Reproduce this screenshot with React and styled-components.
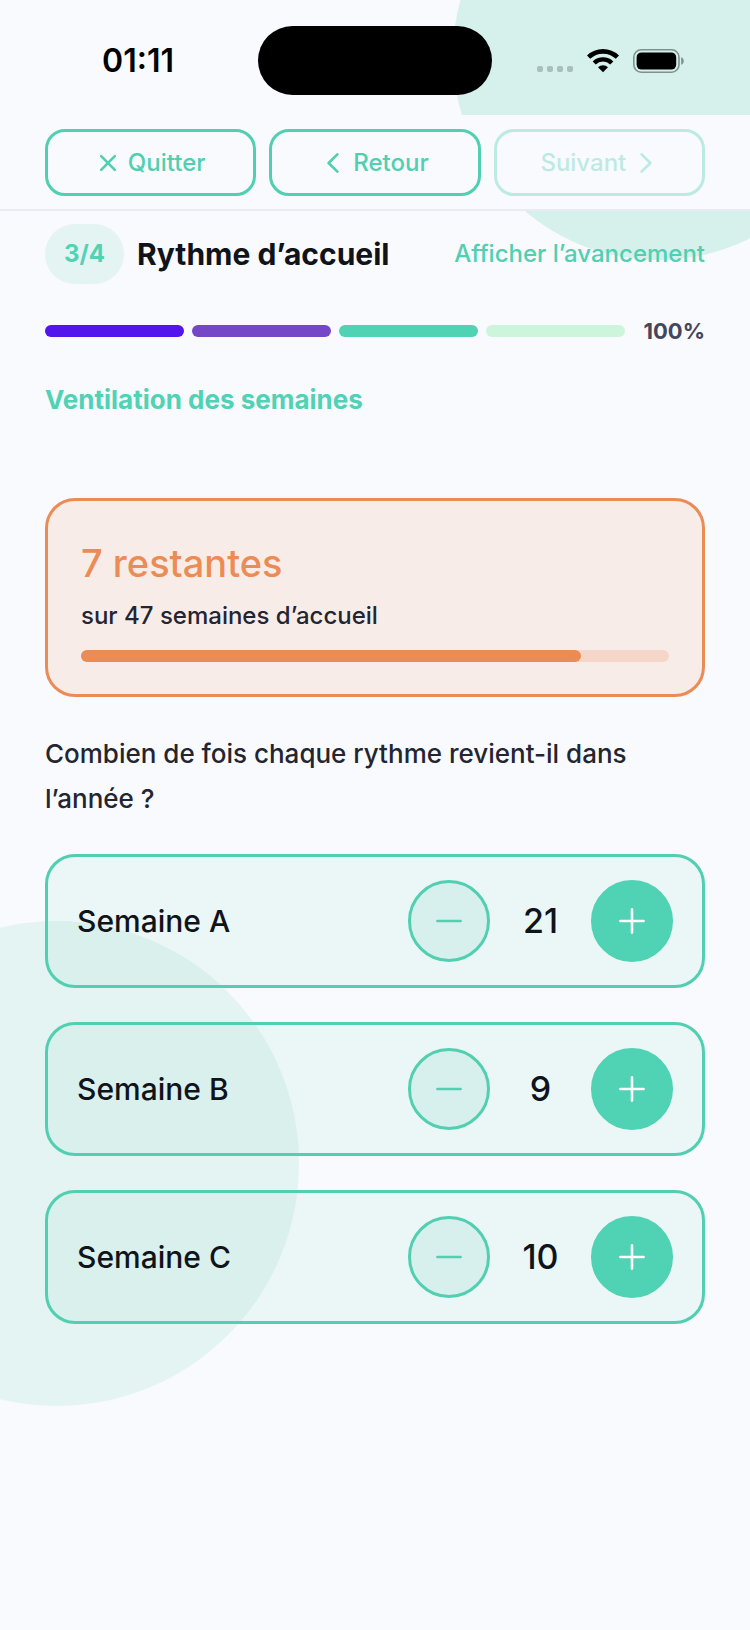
import React, { useState } from "react";
import styled, { createGlobalStyle } from "styled-components";

const GlobalStyle = createGlobalStyle`
  *, *::before, *::after {
    box-sizing: border-box;
  }

  body {
    margin: 0;
    background: #f8fafe;
    color: #10131a;
    font-family: Inter, "Liberation Sans", sans-serif;
    -webkit-font-smoothing: antialiased;
  }

  button {
    font-family: inherit;
    cursor: pointer;
  }
`;

const Page = styled.div`
  position: relative;
  min-height: 100vh;
  overflow: hidden;
  background: #f8fafe;
`;

const Bubble = styled.div`
  position: absolute;
  top: ${({ $top }) => $top}px;
  ${({ $side, $offset }) => `${$side}: ${$offset}px;`}
  width: ${({ $size }) => $size}px;
  height: ${({ $size }) => $size}px;
  border-radius: 50%;
  background: ${({ $color }) => $color};
`;

const Screen = styled.div`
  position: relative;
  display: flex;
  flex-direction: column;
`;

const StatusBar = styled.div`
  display: grid;
  grid-template-columns: 1fr 234px 1fr;
  align-items: center;
  height: 115px;
  padding: 6px 0 0;
`;

const Clock = styled.div`
  padding-left: 18px;
  text-align: center;
  font-size: 32px;
  font-weight: 600;
  line-height: 36px;
  color: #000;
`;

const Island = styled.div`
  height: 69px;
  border-radius: 35px;
  background: #000;
`;

const StatusIcons = styled.div`
  display: flex;
  align-items: center;
  justify-content: center;
  gap: 14px;
  padding-right: 20px;
`;

const Nav = styled.nav`
  display: flex;
  gap: 13px;
  padding: 14px 45px 13px;
  background: #f8fafe;
  border-bottom: 2px solid #e9ebf0;
`;

const NavButton = styled.button`
  flex: 1;
  display: flex;
  align-items: center;
  justify-content: center;
  gap: 8px;
  height: 67px;
  padding: 0;
  border: 3px solid #50cfb1;
  border-radius: 20px;
  background: transparent;
  color: #50cfb1;
  font-size: 24px;
  font-weight: 500;

  &:disabled {
    opacity: 0.35;
    cursor: default;
  }
`;

const Content = styled.main`
  display: flex;
  flex-direction: column;
  padding: 13px 45px 60px;
`;

const StepHeader = styled.header`
  display: flex;
  align-items: center;
  gap: 13px;
`;

const StepBadge = styled.span`
  padding: 0 19px;
  border-radius: 30px;
  background: #e4f4f3;
  color: #50d2b4;
  font-size: 24px;
  font-weight: 700;
  line-height: 60px;
`;

const StepTitle = styled.h1`
  flex: 1;
  margin: 0;
  font-size: 30px;
  font-weight: 700;
  line-height: 36px;
`;

const ProgressLink = styled.a`
  color: #50cfb1;
  font-size: 24px;
  font-weight: 500;
  line-height: 30px;
  text-decoration: none;
`;

const Steps = styled.div`
  display: flex;
  align-items: center;
  gap: 8px;
  margin-top: 32px;
`;

const Step = styled.span`
  flex: 1;
  height: 12px;
  border-radius: 6px;
  background: ${({ $color }) => $color};
`;

const Percent = styled.span`
  padding-left: 11px;
  color: #44465a;
  font-size: 22px;
  font-weight: 700;
  line-height: 30px;
`;

const SectionTitle = styled.h2`
  margin: 36px 0 0;
  color: #50d2b4;
  font-size: 26px;
  font-weight: 700;
  line-height: 36px;
`;

const Summary = styled.section`
  margin-top: 80px;
  padding: 38px 33px;
  padding-bottom: 32px;
  border: 3px solid #e98c55;
  border-radius: 30px;
  background: #f8ece8;
`;

const Remaining = styled.p`
  margin: 0;
  color: #ec8c55;
  font-size: 38px;
  font-weight: 500;
  line-height: 48px;
`;

const Total = styled.p`
  margin: 14px 0 0;
  color: #232531;
  font-size: 24px;
  font-weight: 500;
  line-height: 30px;
`;

const Gauge = styled.div`
  height: 12px;
  margin-top: 19px;
  border-radius: 6px;
  background: #f4d7c8;
`;

const GaugeFill = styled.div`
  height: 100%;
  border-radius: 6px;
  background: #ec8c55;
`;

const Question = styled.p`
  margin: 34px 0 0;
  color: #232531;
  font-size: 26px;
  font-weight: 500;
  line-height: 45px;
`;

const WeekList = styled.ul`
  display: flex;
  flex-direction: column;
  gap: 34px;
  margin: 33px 0 0;
  padding: 0;
  list-style: none;
`;

const WeekCard = styled.li`
  display: flex;
  align-items: center;
  height: 134px;
  padding: 0 29px;
  border: 3px solid #50cfb1;
  border-radius: 30px;
  background: rgba(90, 205, 150, 0.08);
`;

const WeekName = styled.span`
  flex: 1;
  font-size: 30px;
  font-weight: 500;
  line-height: 36px;
`;

const RoundButton = styled.button`
  display: flex;
  align-items: center;
  justify-content: center;
  width: 82px;
  height: 82px;
  padding: 0;
  border: 3px solid ${({ $filled }) => ($filled ? "#50d2b4" : "#50cfb1")};
  border-radius: 50%;
  background: ${({ $filled }) => ($filled ? "#50d2b4" : "#d8f0ed")};
  color: ${({ $filled }) => ($filled ? "#fff" : "#50cfb1")};
`;

const Count = styled.output`
  width: 101px;
  text-align: center;
  font-size: 34px;
  font-weight: 500;
  line-height: 40px;
`;

const WifiIcon = () => (
  <svg width="32" height="24" viewBox="0 0 32 24" fill="none" aria-hidden="true">
    <path d="M1.6 8.2a20.6 20.6 0 0 1 28.8 0" stroke="#000" strokeWidth="4.6" />
    <path d="M7.2 14a12.6 12.6 0 0 1 17.6 0" stroke="#000" strokeWidth="4.4" />
    <path d="M16 23.2l-5-5a7.2 7.2 0 0 1 10 0z" fill="#000" />
  </svg>
);

const DotsIcon = () => (
  <svg width="36" height="24" viewBox="0 0 36 24" fill="#a9bfbb" aria-hidden="true">
    {[0, 10, 20, 30].map((x) => (
      <rect key={x} x={x} y="17" width="6" height="6" rx="2" />
    ))}
  </svg>
);

const BatteryIcon = () => (
  <svg width="52" height="24" viewBox="0 0 52 24" fill="none" aria-hidden="true">
    <rect x="0.8" y="0.8" width="45.2" height="22.4" rx="7.4" stroke="#7f918e" strokeWidth="1.6" />
    <rect x="3.6" y="3.4" width="39.6" height="17.2" rx="5" fill="#000" />
    <path d="M48.2 8.2c3.4 1.2 3.4 6.4 0 7.6z" fill="#7f918e" />
  </svg>
);

const CloseIcon = () => (
  <svg width="24" height="24" viewBox="0 0 24 24" fill="none" stroke="currentColor" strokeWidth="2.6" strokeLinecap="round" aria-hidden="true">
    <path d="M5.2 5.2l13.6 13.6M18.8 5.2L5.2 18.8" />
  </svg>
);

const Chevron = ({ right }) => (
  <svg width="24" height="24" viewBox="0 0 24 24" fill="none" stroke="currentColor" strokeWidth="2.6" strokeLinecap="round" strokeLinejoin="round" aria-hidden="true">
    <path d={right ? "M7.6 3.4l8.8 8.6-8.8 8.6" : "M16.4 3.4L7.6 12l8.8 8.6"} />
  </svg>
);

const SignIcon = ({ plus }) => (
  <svg width="26" height="26" viewBox="0 0 26 26" fill="none" stroke="currentColor" strokeWidth="2.6" strokeLinecap="round" aria-hidden="true">
    <path d={plus ? "M1.4 13h23.2M13 1.4v23.2" : "M1.4 13h23.2"} />
  </svg>
);

const TOTAL_WEEKS = 47;
const STEP_COLORS = ["#5414ec", "#7547c6", "#50d2b4", "#cdf5dc"];

const App = () => {
  const [weeks, setWeeks] = useState([
    { name: "Semaine A", count: 21 },
    { name: "Semaine B", count: 9 },
    { name: "Semaine C", count: 10 },
  ]);

  const used = weeks.reduce((sum, week) => sum + week.count, 0);
  const remaining = TOTAL_WEEKS - used;

  const changeCount = (name, delta) => {
    if (delta > 0 && remaining <= 0) return;
    setWeeks(
      weeks.map((week) =>
        week.name === name
          ? { ...week, count: Math.max(0, week.count + delta) }
          : week
      )
    );
  };

  return (
    <Page>
      <GlobalStyle />
      <Bubble $size={410} $top={-150} $side="right" $offset={-113} $color="#d6f0ec" />
      <Bubble $size={485} $top={921} $side="left" $offset={-186} $color="#e4f4f3" />

      <Screen>
        <StatusBar>
          <Clock>01:11</Clock>
          <Island />
          <StatusIcons>
            <DotsIcon />
            <WifiIcon />
            <BatteryIcon />
          </StatusIcons>
        </StatusBar>

        <Nav>
          <NavButton type="button">
            <CloseIcon />
            Quitter
          </NavButton>
          <NavButton type="button">
            <Chevron />
            Retour
          </NavButton>
          <NavButton type="button" disabled>
            Suivant
            <Chevron right />
          </NavButton>
        </Nav>

        <Content>
          <StepHeader>
            <StepBadge>3/4</StepBadge>
            <StepTitle>Rythme d’accueil</StepTitle>
            <ProgressLink href="#avancement">Afficher l’avancement</ProgressLink>
          </StepHeader>

          <Steps>
            {STEP_COLORS.map((color) => (
              <Step key={color} $color={color} />
            ))}
            <Percent>100%</Percent>
          </Steps>

          <SectionTitle>Ventilation des semaines</SectionTitle>

          <Summary>
            <Remaining>{remaining} restantes</Remaining>
            <Total>sur {TOTAL_WEEKS} semaines d’accueil</Total>
            <Gauge>
              <GaugeFill style={{ width: `${(used / TOTAL_WEEKS) * 100}%` }} />
            </Gauge>
          </Summary>

          <Question>
            Combien de fois chaque rythme revient-il dans l’année ?
          </Question>

          <WeekList>
            {weeks.map(({ name, count }) => (
              <WeekCard key={name}>
                <WeekName>{name}</WeekName>
                <RoundButton
                  type="button"
                  aria-label={`Retirer une ${name}`}
                  onClick={() => changeCount(name, -1)}
                >
                  <SignIcon />
                </RoundButton>
                <Count>{count}</Count>
                <RoundButton
                  type="button"
                  $filled
                  aria-label={`Ajouter une ${name}`}
                  onClick={() => changeCount(name, 1)}
                >
                  <SignIcon plus />
                </RoundButton>
              </WeekCard>
            ))}
          </WeekList>
        </Content>
      </Screen>
    </Page>
  );
};

export default App;
